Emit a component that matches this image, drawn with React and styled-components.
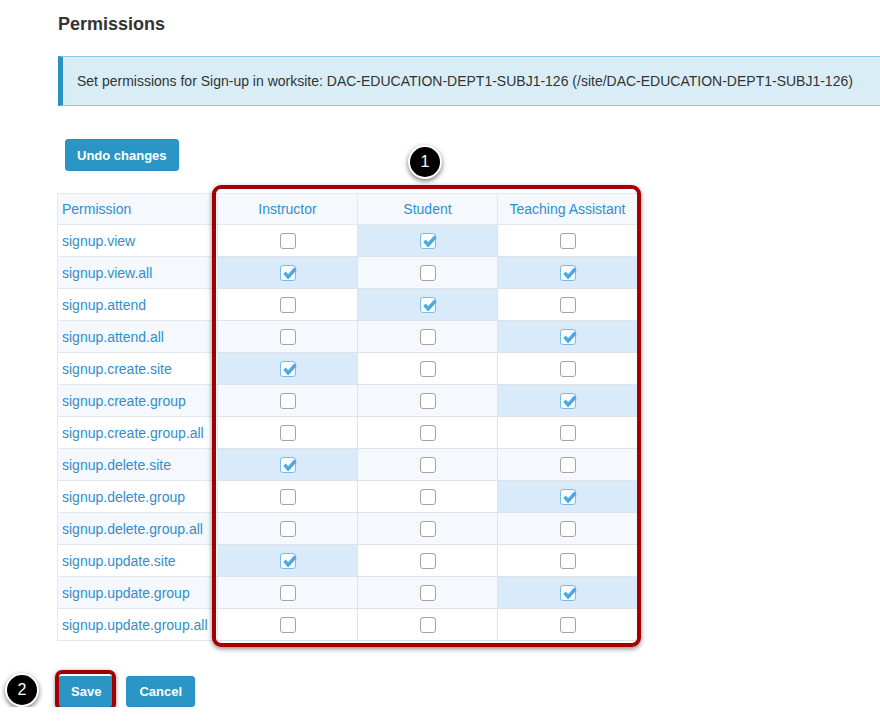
import React from "react";
import styled, { createGlobalStyle } from "styled-components";

const GlobalStyle = createGlobalStyle`
  html, body { margin: 0; padding: 0; background: #ffffff; overflow: hidden; }
  body { font-family: "Liberation Sans", Arial, sans-serif; }
`;

const Page = styled.div`
  padding: 14px 0 0 58px;
  position: relative;
`;

const Title = styled.h2`
  margin: 0;
  font-size: 18px;
  line-height: 21px;
  font-weight: 700;
  color: #333333;
`;

const InfoBox = styled.div`
  margin-top: 21px;
  margin-right: -30px;
  height: 50px;
  box-sizing: border-box;
  display: flex;
  align-items: center;
  background: #d9edf7;
  border: 1px solid #8ac6e8;
  border-left: 5px solid #2a91c0;
  color: #333333;
  font-size: 14px;
  white-space: nowrap;
`;

const InfoText = styled.span`
  margin-left: 14px;
`;

const Button = styled.button`
  height: ${(p) => p.$h || 32}px;
  padding: 0 ${(p) => p.$px || 12}px;
  border: 1px solid #2a8fbf;
  border-radius: 3px;
  background: #2b95c6;
  color: #ffffff;
  font-family: "Liberation Sans", Arial, sans-serif;
  font-size: 13px;
  font-weight: 700;
  cursor: pointer;
`;

const UndoRow = styled.div`
  margin-top: 33px;
  margin-left: 7px;
  display: flex;
`;

const TableWrap = styled.div`
  margin-top: 22px;
  margin-left: -1px;
  position: relative;
  width: fit-content;
`;

const Table = styled.table`
  border-collapse: collapse;
  table-layout: fixed;
  width: 580px;
  font-size: 14px;
  color: #2f8fce;
`;

const HeadCell = styled.th`
  height: 30px;
  padding: 0 4px;
  font-weight: 400;
  text-align: ${(p) => (p.$left ? "left" : "center")};
  background: #f5f9fd;
  border: 1px solid #e3e8ed;
`;

const Row = styled.tr`
  height: 32px;
  background: ${(p) => (p.$striped ? "#f5f9fd" : "#ffffff")};
`;

const NameCell = styled.td`
  padding: 0 4px;
  white-space: nowrap;
  overflow: visible;
  border: 1px solid #e3e8ed;
`;

const BoxCell = styled.td`
  text-align: center;
  vertical-align: middle;
  padding: 0;
  border: 1px solid #dfe3e7;
  background: ${(p) => (p.$checked ? "#d9eafb" : "transparent")};
`;

const Check = styled.span`
  display: inline-block;
  width: 16px;
  height: 16px;
  box-sizing: border-box;
  border: 1px solid ${(p) => (p.$checked ? "#79bce9" : "#a3a3a3")};
  border-radius: 3px;
  background: #ffffff;
  vertical-align: middle;
  position: relative;
  svg { position: absolute; left: -1px; top: -2px; }
`;

const Highlight = styled.div`
  position: absolute;
  left: 155px;
  top: -8px;
  width: 429px;
  height: 462px;
  box-sizing: border-box;
  border: 4px solid #a50000;
  border-radius: 9px;
  box-shadow: 0 2px 5px rgba(0, 0, 0, 0.45);
  pointer-events: none;
`;

const Badge = styled.div`
  position: absolute;
  left: ${(p) => p.$x}px;
  top: ${(p) => p.$y}px;
  width: 30px;
  height: 30px;
  border-radius: 50%;
  background: #000000;
  border: 2px solid #ffffff;
  box-shadow: 0 2px 5px rgba(0, 0, 0, 0.55);
  color: #ffffff;
  font-size: 16px;
  display: flex;
  align-items: center;
  justify-content: center;
`;

const ActionRow = styled.div`
  margin-top: 35px;
  display: flex;
  gap: 12px;
  position: relative;
`;

const SaveWrap = styled.span`
  position: relative;
  display: inline-flex;
  &::after {
    content: "";
    position: absolute;
    left: -3px;
    right: -2px;
    top: -6px;
    bottom: -4px;
    border: 4px solid #a50000;
    border-radius: 7px;
    box-shadow: 0 1px 4px rgba(0, 0, 0, 0.45);
    pointer-events: none;
  }
`;

const CheckBox = ({ checked }) => (
  <Check $checked={checked}>
    {checked && (
      <svg width="18" height="18" viewBox="0 0 18 18">
        <path
          d="M3.2 10 L5.9 7.6 L8.1 10.2 L14.2 3.6 L16.8 6.1 L8.1 15.4 Z"
          fill="#4ea8e3"
        />
      </svg>
    )}
  </Check>
);

const rows = [
  ["signup.view", 0, 1, 0],
  ["signup.view.all", 1, 0, 1],
  ["signup.attend", 0, 1, 0],
  ["signup.attend.all", 0, 0, 1],
  ["signup.create.site", 1, 0, 0],
  ["signup.create.group", 0, 0, 1],
  ["signup.create.group.all", 0, 0, 0],
  ["signup.delete.site", 1, 0, 0],
  ["signup.delete.group", 0, 0, 1],
  ["signup.delete.group.all", 0, 0, 0],
  ["signup.update.site", 1, 0, 0],
  ["signup.update.group", 0, 0, 1],
  ["signup.update.group.all", 0, 0, 0],
];

export default function App() {
  return (
    <>
      <GlobalStyle />
      <Page>
        <Title>Permissions</Title>
        <InfoBox>
          <InfoText>
            Set permissions for Sign-up in worksite: DAC-EDUCATION-DEPT1-SUBJ1-126
            (/site/DAC-EDUCATION-DEPT1-SUBJ1-126)
          </InfoText>
        </InfoBox>
        <UndoRow>
          <Button $px={11}>Undo changes</Button>
        </UndoRow>
        <TableWrap>
          <Table>
            <colgroup>
              <col style={{ width: 160 }} />
              <col style={{ width: 140 }} />
              <col style={{ width: 140 }} />
              <col style={{ width: 140 }} />
            </colgroup>
            <thead>
              <tr>
                <HeadCell $left>Permission</HeadCell>
                <HeadCell>Instructor</HeadCell>
                <HeadCell>Student</HeadCell>
                <HeadCell>Teaching Assistant</HeadCell>
              </tr>
            </thead>
            <tbody>
              {rows.map(([name, ...vals], i) => (
                <Row key={name} $striped={i % 2 === 1}>
                  <NameCell>{name}</NameCell>
                  {vals.map((v, j) => (
                    <BoxCell key={j} $checked={!!v}>
                      <CheckBox checked={!!v} />
                    </BoxCell>
                  ))}
                </Row>
              ))}
            </tbody>
          </Table>
          <Highlight />
          <Badge $x={351} $y={-48}>1</Badge>
        </TableWrap>
        <ActionRow>
          <Badge $x={-53} $y={-3}>2</Badge>
          <SaveWrap>
            <Button $h={31}>Save</Button>
          </SaveWrap>
          <Button $h={31}>Cancel</Button>
        </ActionRow>
      </Page>
    </>
  );
}
